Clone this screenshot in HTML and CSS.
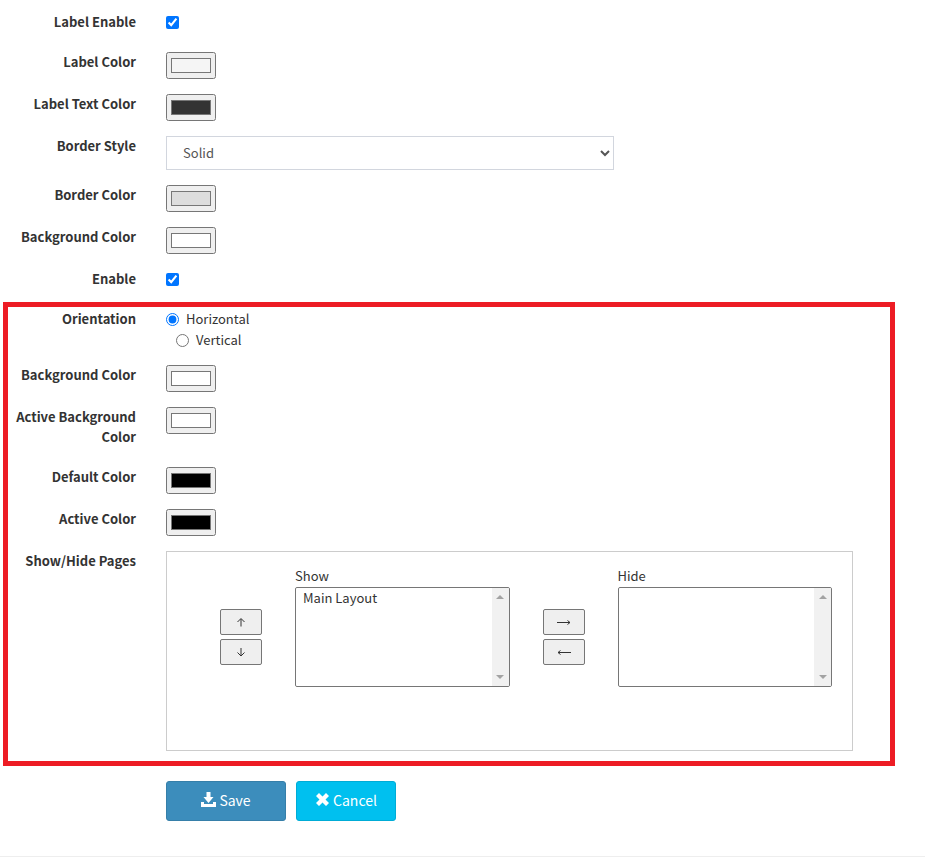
FILE: index.html
```html
<!DOCTYPE html>
<html lang="en">
<head>
<meta charset="utf-8">
<title>Layout settings</title>
<link rel="stylesheet" href="styles.css">
</head>
<body>
<form>
  <div class="rows">
    <div class="row"><label class="name" for="label-enable">Label Enable</label><div><input class="tick" type="checkbox" id="label-enable" checked></div></div>
    <div class="row"><label class="name" for="label-color">Label Color</label><div><input type="color" id="label-color" value="#f5f5f5"></div></div>
    <div class="row"><label class="name" for="label-text">Label Text Color</label><div><input type="color" id="label-text" value="#333333"></div></div>
    <div class="row"><label class="name" for="border-style">Border Style</label><div><select class="dropdown" id="border-style"><option>Solid</option></select></div></div>
    <div class="row"><label class="name" for="border-color">Border Color</label><div><input type="color" id="border-color" value="#dddddd"></div></div>
    <div class="row"><label class="name" for="bg-color">Background Color</label><div><input type="color" id="bg-color" value="#ffffff"></div></div>
    <div class="row"><label class="name" for="enable">Enable</label><div><input class="tick" type="checkbox" id="enable" checked></div></div>
  </div>

  <section class="rows highlight">
    <div class="row" role="radiogroup" aria-labelledby="orientation">
      <span class="name" id="orientation">Orientation</span>
      <div class="choices">
        <label class="choice"><input type="radio" name="orientation" checked>Horizontal</label>
        <label class="choice indent"><input type="radio" name="orientation">Vertical</label>
      </div>
    </div>
    <div class="row"><label class="name" for="nav-bg">Background Color</label><div><input type="color" id="nav-bg" value="#ffffff"></div></div>
    <div class="row"><label class="name" for="nav-active-bg">Active Background Color</label><div><input type="color" id="nav-active-bg" value="#ffffff"></div></div>
    <div class="row"><label class="name" for="nav-default">Default Color</label><div><input type="color" id="nav-default" value="#000000"></div></div>
    <div class="row"><label class="name" for="nav-active">Active Color</label><div><input type="color" id="nav-active" value="#000000"></div></div>
    <div class="row">
      <span class="name">Show/Hide Pages</span>
      <div class="pages">
        <div class="movers">
          <button type="button" aria-label="Move up"><svg viewBox="0 0 14 10"><path d="M7 9.500V2M3.500 5 7 1.500 10.500 5"/></svg></button>
          <button type="button" aria-label="Move down"><svg viewBox="0 0 14 10"><path d="M7 1v7.500M3.500 5.500 7 9l3.500-3.500"/></svg></button>
        </div>
        <div class="list">
          <label for="show">Show</label>
          <div class="listbox">
            <select id="show" size="5"><option>Main Layout</option></select>
            <span class="scroll"><svg viewBox="0 0 8 4"><path d="M0 4 4 0l4 4z"/></svg><svg viewBox="0 0 8 4"><path d="M0 0h8L4 4z"/></svg></span>
          </div>
        </div>
        <div class="movers">
          <button type="button" aria-label="Move to hide"><svg viewBox="0 0 14 10"><path d="M0 5.500h13M10.500 3.500l2.500 2-2.500 2"/></svg></button>
          <button type="button" aria-label="Move to show"><svg viewBox="0 0 14 10"><path d="M14 5.500H1M3.500 3.500 1 5.500l2.500 2"/></svg></button>
        </div>
        <div class="list">
          <label for="hide">Hide</label>
          <div class="listbox">
            <select id="hide" size="5"></select>
            <span class="scroll"><svg viewBox="0 0 8 4"><path d="M0 4 4 0l4 4z"/></svg><svg viewBox="0 0 8 4"><path d="M0 0h8L4 4z"/></svg></span>
          </div>
        </div>
      </div>
    </div>
  </section>

  <div class="actions">
    <button class="btn save" type="submit"><svg viewBox="0 0 15 15"><path d="M5.500 0h4v5h3L7.500 11l-5-6h3zM0 10h3v2h9v-2h3v5H0z"/></svg>Save</button>
    <button class="btn cancel" type="button"><svg viewBox="0 0 15 15"><path d="M4 1 7.500 4.500 11 1l3 3-3.500 3.500L14 11l-3 3-3.500-3.500L4 14l-3-3 3.500-3.500L1 4z"/></svg>Cancel</button>
  </div>
</form>
<hr>
</body>
</html>
```
FILE: styles.css
```css
* { box-sizing: border-box; }

body {
  margin: 0;
  background: #fff;
  color: #333;
  font: 13px/20px "Noto Sans CJK SC", "Noto Sans", sans-serif;
}

button, select, input { font: inherit; color: inherit; margin: 0; }

.rows {
  display: grid;
  gap: 15px;
  padding: 12px 72px 8px 8px;
}

.row {
  display: grid;
  grid-template-columns: 128px minmax(0, 1fr);
  column-gap: 30px;
  align-items: start;
}

.name {
  margin-bottom: 5px;
  font-weight: 700;
  text-align: right;
}

.highlight {
  margin: 0 30px 0 3px;
  border: 5px solid #ed1c24;
  padding: 2px 37px 10px 0;
}

.tick, .choice input { display: block; width: 13px; height: 13px; }
.tick { margin-top: 4px; }

input[type="color"] {
  display: block;
  width: 50px;
  height: 27px;
}

.dropdown {
  display: block;
  width: 100%;
  max-width: 448px;
  height: 34px;
  padding: 5px 2px 7px 12px;
  border: 1px solid #d2d6de;
  border-radius: 0;
  background-color: #fff;
  color: #555;
}

.choices { display: grid; gap: 1px; }
.choice { display: flex; align-items: center; gap: 7px; }
.indent { margin-left: 10px; }

.pages {
  display: grid;
  grid-template-columns: 42px minmax(0, 1fr) 42px minmax(0, 1fr);
  column-gap: 33px;
  align-items: start;
  min-height: 200px;
  padding: 14px 20px 0 53px;
  border: 1px solid #ccc;
}

.movers { display: grid; gap: 4px; padding-top: 43px; }

.movers button {
  display: flex;
  align-items: center;
  justify-content: center;
  height: 26px;
  padding: 0;
  border: 1px solid #767676;
  border-radius: 2px;
  background: #efefef;
}

.movers svg { width: 14px; height: 10px; fill: none; stroke: #333; }

.list label { display: block; margin-bottom: 1px; }

.listbox {
  display: flex;
  height: 100px;
  border: 1px solid #767676;
  border-radius: 2px;
  overflow: hidden;
}

.listbox select {
  flex: 1;
  min-width: 0;
  padding: 0;
  border: 0;
  background: #fff;
  outline: 0;
}

.listbox option { min-height: 18px; line-height: 18px; padding: 0 7px; }

.scroll {
  display: flex;
  flex-direction: column;
  justify-content: space-between;
  align-items: center;
  width: 17px;
  padding: 7px 0;
  background: #f1f1f1;
}

.scroll svg { width: 8px; height: 4px; fill: #a3a3a3; }

.actions {
  display: flex;
  gap: 10px;
  padding: 15px 0 35px 166px;
}

.btn {
  display: flex;
  align-items: center;
  justify-content: center;
  gap: 3px;
  width: 120px;
  height: 40px;
  padding: 0 0 2px;
  border: 1px solid #367fa9;
  border-radius: 3px;
  background: #3c8dbc;
  color: #fff;
  font-size: 14px;
}

.btn svg { width: 15px; height: 15px; margin-bottom: 2px; fill: currentColor; }
.cancel { width: 100px; border-color: #00acd6; background: #00c0ef; }

hr { margin: 0; border: 0; border-top: 1px solid #eee; }
```
